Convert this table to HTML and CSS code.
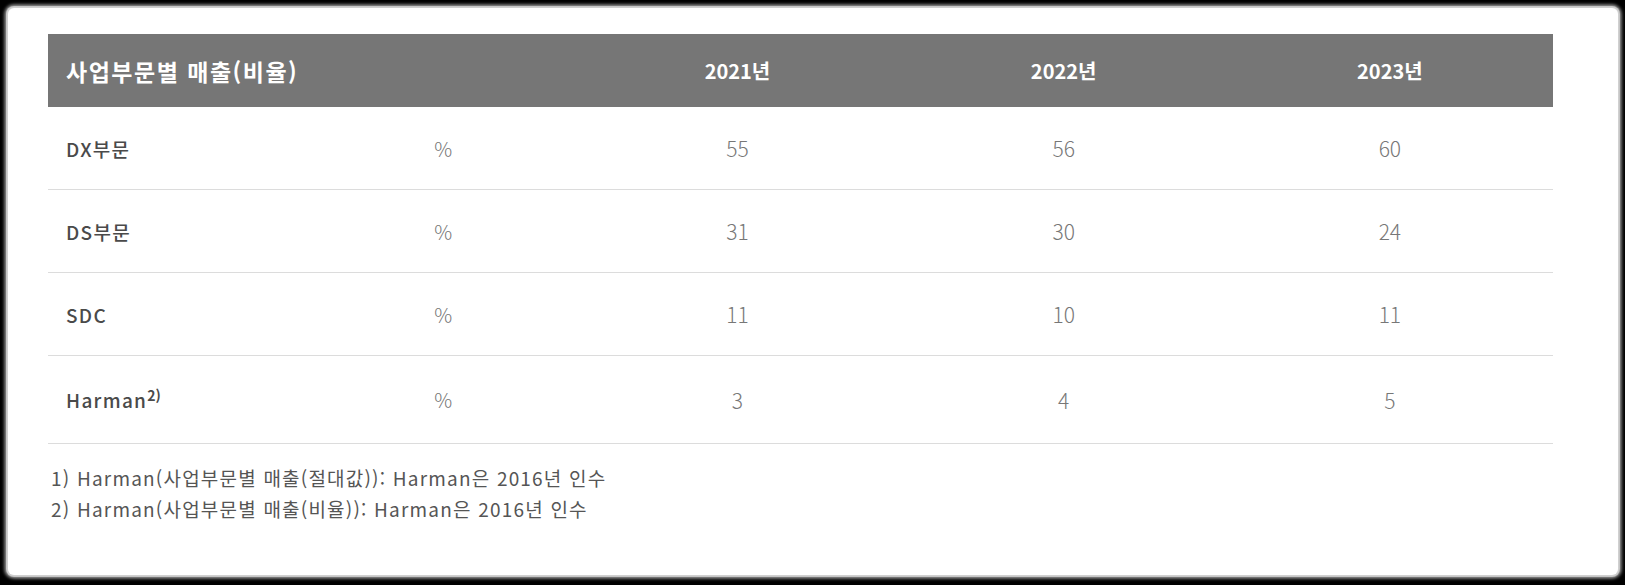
FILE: index.html
```html
<!DOCTYPE html>
<html lang="ko">
<head>
<meta charset="utf-8">
<link rel="stylesheet" href="styles.css">
</head>
<body>
<div class="card">
  <table class="sales">
    <colgroup>
      <col class="c-label"><col class="c-unit"><col class="c-year"><col class="c-year"><col class="c-year">
    </colgroup>
    <thead>
      <tr>
        <th class="title" colspan="2">사업부문별 매출(비율)</th>
        <th>2021년</th>
        <th>2022년</th>
        <th>2023년</th>
      </tr>
    </thead>
    <tbody>
      <tr><td class="label">DX부문</td><td class="unit">%</td><td>55</td><td>56</td><td>60</td></tr>
      <tr><td class="label">DS부문</td><td class="unit">%</td><td>31</td><td>30</td><td>24</td></tr>
      <tr><td class="label">SDC</td><td class="unit">%</td><td>11</td><td>10</td><td>11</td></tr>
      <tr class="tall"><td class="label">Harman<sup>2)</sup></td><td class="unit">%</td><td>3</td><td>4</td><td>5</td></tr>
    </tbody>
  </table>
  <div class="notes">
    <p>1) Harman(사업부문별 매출(절대값)): Harman은 2016년 인수</p>
    <p>2) Harman(사업부문별 매출(비율)): Harman은 2016년 인수</p>
  </div>
</div>
</body>
</html>
```

FILE: styles.css
```css
html, body {
  margin: 0;
  padding: 0;
  background: #000;
}
body {
  padding: 8px 7px 10px 8px;
  font-family: "Noto Sans CJK KR", "Noto Sans", sans-serif;
}
.card {
  box-sizing: border-box;
  width: 1610px;
  height: 567px;
  background: #fff;
  border-radius: 6px;
  padding: 26px 65px 0 40px;
  box-shadow: 0 0 1px 2px #d0d0d0, 0 0 3px 4px #7a7a7a;
}
.sales {
  width: 1505px;
  border-collapse: collapse;
  table-layout: fixed;
}
.c-label { width: 368px; }
.c-unit { width: 158px; }
.c-year { width: 326px; }
.sales th {
  background: #767676;
  color: #fff;
  height: 73px;
  padding: 0;
  font-size: 20px;
  font-weight: 700;
  text-align: center;
}
.sales th.title {
  text-align: left;
  padding-left: 18px;
  font-size: 23px;
  letter-spacing: 1.5px;
}
.sales td {
  height: 82px;
  padding: 0;
  text-align: center;
  font-size: 21px;
  font-weight: 300;
  color: #777;
  border-bottom: 1px solid #dcdcdc;
}
.sales tr.tall td {
  height: 87px;
}
.sales td.label {
  text-align: left;
  padding-left: 18px;
  font-size: 19px;
  letter-spacing: 1.3px;
  font-weight: 500;
  color: #4a4a4a;
}
.sales td.unit {
  text-align: left;
  padding-left: 18px;
  font-size: 20px;
}
.sales sup {
  font-size: 14px;
  font-weight: 700;
  letter-spacing: 0;
  line-height: 0;
}
.notes {
  padding: 18px 0 0 3px;
}
.notes p {
  margin: 0;
  font-size: 19px;
  letter-spacing: 1.2px;
  line-height: 31px;
  font-weight: 400;
  color: #555;
}
```
